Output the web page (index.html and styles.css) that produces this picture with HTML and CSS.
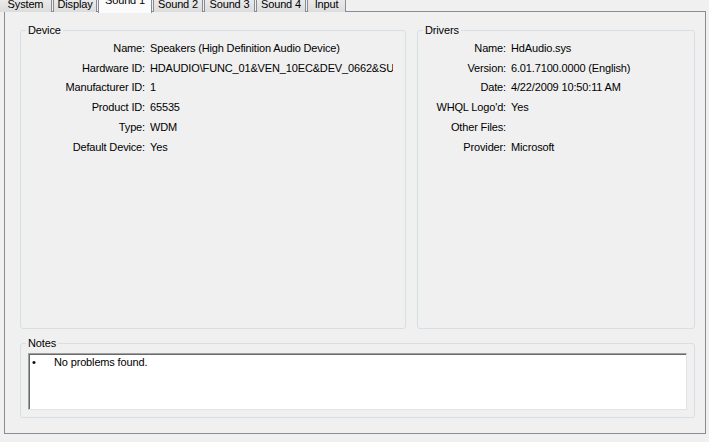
FILE: index.html
```html
<!DOCTYPE html>
<html lang="en">
<head>
    <meta charset="UTF-8">
    <title>DirectX Diagnostic Tool - Sound 1</title>
    <link rel="stylesheet" href="styles.css">
</head>
<body>
    <div class="tabs">
        <div class="tab">System</div>
        <div class="tab">Display</div>
        <div class="tab active">Sound 1</div>
        <div class="tab">Sound 2</div>
        <div class="tab">Sound 3</div>
        <div class="tab">Sound 4</div>
        <div class="tab">Input</div>
    </div>

    <div class="panel">
        <div class="top-row">
            <div class="group device">
                <span class="group-title">Device</span>
                <div class="rows">
                    <div class="label">Name:</div><div class="value">Speakers (High Definition Audio Device)</div>
                    <div class="label">Hardware ID:</div><div class="value">HDAUDIO\FUNC_01&amp;VEN_10EC&amp;DEV_0662&amp;SUBSYS_10438445&amp;REV_1001</div>
                    <div class="label">Manufacturer ID:</div><div class="value">1</div>
                    <div class="label">Product ID:</div><div class="value">65535</div>
                    <div class="label">Type:</div><div class="value">WDM</div>
                    <div class="label">Default Device:</div><div class="value">Yes</div>
                </div>
            </div>

            <div class="group drivers">
                <span class="group-title">Drivers</span>
                <div class="rows">
                    <div class="label">Name:</div><div class="value">HdAudio.sys</div>
                    <div class="label">Version:</div><div class="value">6.01.7100.0000 (English)</div>
                    <div class="label">Date:</div><div class="value">4/22/2009 10:50:11 AM</div>
                    <div class="label">WHQL Logo'd:</div><div class="value">Yes</div>
                    <div class="label">Other Files:</div><div class="value"></div>
                    <div class="label">Provider:</div><div class="value">Microsoft</div>
                </div>
            </div>
        </div>

        <div class="group notes">
            <span class="group-title">Notes</span>
            <div class="notes-box">
                <div class="note"><span class="bullet">&bull;</span>No problems found.</div>
            </div>
        </div>
    </div>
</body>
</html>
```

FILE: styles.css
```css
* {
    margin: 0;
    padding: 0;
    box-sizing: border-box;
}

body {
    background: #f0f0f0;
    font-family: "Liberation Sans", Arial, sans-serif;
    font-size: 11px;
    letter-spacing: -0.15px;
    color: #000;
    width: 709px;
    height: 442px;
    overflow: hidden;
}

/* tab strip, cut off at the top of the window */
.tabs {
    display: flex;
    align-items: flex-end;
    gap: 1px;
    height: 12px;
    position: relative;
    z-index: 1;
}

.tab {
    height: 20px;
    padding-top: 1px;
    line-height: 20px;
    text-align: center;
    border: 1px solid #898c95;
    border-bottom: none;
    border-radius: 2px 2px 0 0;
    background: linear-gradient(#f2f2f2, #dcdcdc);
    white-space: nowrap;
}

.tab:nth-child(1) { width: 53px; margin-left: -1px; }
.tab:nth-child(2) { width: 44px; }
.tab:nth-child(3) { width: 54px; }
.tab:nth-child(4) { width: 50px; }
.tab:nth-child(5) { width: 51px; }
.tab:nth-child(6) { width: 50px; }
.tab:nth-child(7) { width: 39px; }

.tab.active {
    height: 22px;
    padding-top: 0;
    line-height: 16px;
    background: #fbfbfb;
    position: relative;
    top: 1px;
}

.panel {
    margin: -1px 3px 0 4px;
    height: 423px;
    border: 1px solid #898c95;
    padding: 18px 10px 15px 15px;
    display: flex;
    flex-direction: column;
}

.top-row {
    display: flex;
    gap: 11px;
    height: 299px;
}

.group {
    border: 1px solid #d5dfe5;
    border-radius: 3px;
}

.group-title {
    display: block;
    width: fit-content;
    height: 13px;
    line-height: 13px;
    margin: -7px 0 0 5px;
    padding: 0 2px;
    background: #f0f0f0;
}

.device {
    width: 386px;
}

.drivers {
    flex: 1;
}

.rows {
    display: grid;
    column-gap: 5px;
    grid-auto-rows: 19.8px;
    align-items: center;
    margin-top: 1px;
}

.device .rows {
    grid-template-columns: 124px 243px;
}

.drivers .rows {
    grid-template-columns: 88px 1fr;
}

.label {
    text-align: right;
    white-space: nowrap;
}

.value {
    white-space: nowrap;
    overflow: hidden;
}

.notes {
    margin-top: 14px;
    flex: 1;
    padding: 0 7px 7px 7px;
    display: flex;
    flex-direction: column;
}

.notes .group-title {
    margin-left: -2px;
}

.notes-box {
    flex: 1;
    margin-top: 3px;
    background: #fff;
    border-top: 1px solid #a0a0a0;
    border-left: 1px solid #a0a0a0;
    border-right: 1px solid #e3e3e3;
    border-bottom: 1px solid #e3e3e3;
    box-shadow: inset 1px 1px 0 #696969;
    padding: 1px 0 0 3px;
}

.note {
    line-height: 14px;
}

.bullet {
    display: inline-block;
    width: 22px;
}
```
